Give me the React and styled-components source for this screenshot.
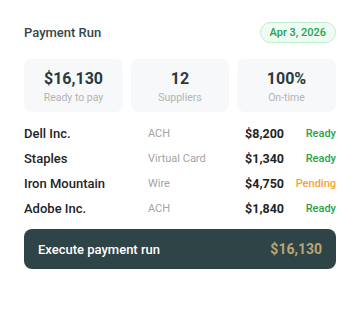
import React from 'react';
import styled, { createGlobalStyle } from 'styled-components';

const GlobalStyle = createGlobalStyle`
  body {
    margin: 0;
    background: #ffffff;
    font-family: Roboto, "Liberation Sans", sans-serif;
  }
`;

const PaymentRun = () => {
  const stats = [
    { id: 1, value: '$16,130', label: 'Ready to pay' },
    { id: 2, value: '12', label: 'Suppliers' },
    { id: 3, value: '100%', label: 'On-time' },
  ];

  const payments = [
    { id: 1, name: 'Dell Inc.', method: 'ACH', amount: '$8,200', status: 'Ready' },
    { id: 2, name: 'Staples', method: 'Virtual Card', amount: '$1,340', status: 'Ready' },
    { id: 3, name: 'Iron Mountain', method: 'Wire', amount: '$4,750', status: 'Pending' },
    { id: 4, name: 'Adobe Inc.', method: 'ACH', amount: '$1,840', status: 'Ready' },
  ];

  return (
    <Wrapper>
      <Header>
        <Title>Payment Run</Title>
        <DatePill>Apr 3, 2026</DatePill>
      </Header>
      <StatGrid>
        {stats.map((stat) => (
          <StatCard key={stat.id}>
            <StatValue>{stat.value}</StatValue>
            <StatLabel>{stat.label}</StatLabel>
          </StatCard>
        ))}
      </StatGrid>
      <List>
        {payments.map((p) => (
          <Row key={p.id}>
            <Name>{p.name}</Name>
            <Method>{p.method}</Method>
            <Amount>{p.amount}</Amount>
            <Status $pending={p.status === 'Pending'}>{p.status}</Status>
          </Row>
        ))}
      </List>
      <ExecuteButton>
        <span>Execute payment run</span>
        <ButtonAmount>$16,130</ButtonAmount>
      </ExecuteButton>
    </Wrapper>
  );
};

const App = () => (
  <>
    <GlobalStyle />
    <PaymentRun />
  </>
);

const Wrapper = styled.div`
  width: 312px;
  padding: 22px 24px 0;
`;

const Header = styled.div`
  display: flex;
  align-items: center;
  justify-content: space-between;
  height: 21px;
`;

const Title = styled.h1`
  margin: 0;
  font-size: 13px;
  font-weight: 500;
  color: #33474a;
`;

const DatePill = styled.div`
  box-sizing: border-box;
  height: 21px;
  padding: 0 9px;
  display: flex;
  align-items: center;
  border: 1px solid #bdeecb;
  border-radius: 11px;
  background: #effcf3;
  color: #23a24c;
  font-size: 11px;
  font-weight: 500;
`;

const StatGrid = styled.div`
  display: grid;
  grid-template-columns: 99px 98px 99px;
  gap: 8px;
  margin-top: 16px;
`;

const StatCard = styled.div`
  box-sizing: border-box;
  height: 53px;
  padding-top: 10px;
  border-radius: 8px;
  background: #f7f8fa;
  display: flex;
  flex-direction: column;
  align-items: center;
`;

const StatValue = styled.div`
  font-size: 16px;
  font-weight: 700;
  color: #293b3d;
  line-height: 19px;
`;

const StatLabel = styled.div`
  font-size: 10.5px;
  color: #b3b3b3;
  line-height: 14px;
  margin-top: 3px;
`;

const List = styled.div`
  margin-top: 9px;
  display: flex;
  flex-direction: column;
`;

const Row = styled.div`
  display: grid;
  grid-template-columns: 124px 1fr 60px 52px;
  align-items: center;
  height: 25px;
`;

const Name = styled.div`
  font-size: 13px;
  font-weight: 500;
  color: #1f2426;
`;

const Method = styled.div`
  font-size: 11px;
  color: #a3a3a3;
`;

const Amount = styled.div`
  font-size: 12.5px;
  font-weight: 700;
  color: #1f2426;
  text-align: right;
`;

const Status = styled.div`
  font-size: 11px;
  font-weight: 500;
  text-align: right;
  color: ${(p) => (p.$pending ? '#f4a62a' : '#25a24c')};
`;

const ExecuteButton = styled.button`
  box-sizing: border-box;
  width: 100%;
  height: 40px;
  margin-top: 8px;
  padding: 0 14px;
  display: flex;
  align-items: center;
  justify-content: space-between;
  border: none;
  border-radius: 8px;
  background: #2f4446;
  color: #ffffff;
  font-family: inherit;
  font-size: 13px;
  font-weight: 500;
  cursor: pointer;
`;

const ButtonAmount = styled.span`
  color: #b9a672;
  font-size: 14px;
  font-weight: 700;
`;

export default App;
